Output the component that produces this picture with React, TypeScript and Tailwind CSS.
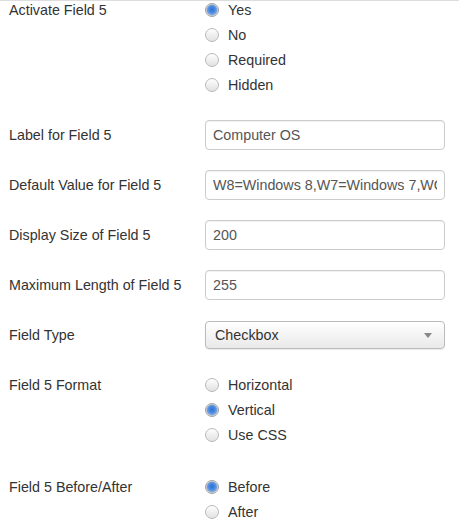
import { useId } from "react";

function Radio({ checked }: { checked?: boolean }) {
  const id = useId();
  return (
    <svg width="14" height="14" viewBox="0 0 14 14" className="shrink-0">
      <defs>
        <linearGradient id={id + "u"} x1="0" y1="0" x2="0" y2="1">
          <stop offset="0" stopColor="#ffffff" />
          <stop offset="1" stopColor="#e0e0e0" />
        </linearGradient>
        <radialGradient id={id + "c"} cx="0.5" cy="0.45" r="0.6">
          <stop offset="0" stopColor="#2f6fd3" />
          <stop offset="0.55" stopColor="#4a8be3" />
          <stop offset="1" stopColor="#9cc4f3" />
        </radialGradient>
      </defs>
      {checked ? (
        <>
          <circle cx="7" cy="7" r="6.5" fill="#dcdcdc" stroke="#a3a3a3" />
          <circle cx="7" cy="7" r="5" fill={`url(#${id}c)`} stroke="#5a86c4" strokeWidth="0.6" />
        </>
      ) : (
        <circle cx="7" cy="7" r="6.5" fill={`url(#${id}u)`} stroke="#b9b9b9" />
      )}
    </svg>
  );
}

function RadioGroup({ options, value }: { options: string[]; value: string }) {
  return (
    <div className="flex flex-col gap-[5px]">
      {options.map((o) => (
        <label key={o} className="flex items-center h-5 gap-[9px]">
          <Radio checked={o === value} />
          <span>{o}</span>
        </label>
      ))}
    </div>
  );
}

function TextInput({ value }: { value: string }) {
  return (
    <input
      readOnly
      value={value}
      className="w-[240px] h-[30px] border border-[#cccccc] rounded-[4px] bg-white px-[7px] text-[#555555] outline-none shadow-[inset_0_1px_1px_rgba(0,0,0,0.06)]"
    />
  );
}

export default function App() {
  return (
    <div
      className="w-[459px] min-h-[529px] bg-white border-t border-[#dddddd] pl-[9px] text-[14.3px] leading-5 text-[#333333]"
      style={{ fontFamily: '"Liberation Sans", Arial, sans-serif' }}
    >
      <div className="flex -mt-px mb-[25px]">
        <div className="w-[196px]">Activate Field 5</div>
        <RadioGroup options={["Yes", "No", "Required", "Hidden"]} value="Yes" />
      </div>

      <div className="flex items-center mb-5">
        <div className="w-[196px]">Label for Field 5</div>
        <TextInput value="Computer OS" />
      </div>

      <div className="flex items-center mb-5">
        <div className="w-[196px]">Default Value for Field 5</div>
        <TextInput value="W8=Windows 8,W7=Windows 7,WOSX=Mac OSX" />
      </div>

      <div className="flex items-center mb-5">
        <div className="w-[196px]">Display Size of Field 5</div>
        <TextInput value="200" />
      </div>

      <div className="flex items-center mb-5">
        <div className="w-[196px]">Maximum Length of Field 5</div>
        <TextInput value="255" />
      </div>

      <div className="flex items-center h-[30px] mb-[25px]">
        <div className="w-[196px]">Field Type</div>
        <div className="w-[240px] h-[28px] border border-[#bbbbbb] rounded-[4px] bg-linear-to-b from-white to-[#e9e9e9] pl-[9px] pr-[12px] flex items-center justify-between shadow-[0_1px_1px_rgba(0,0,0,0.08)]">
          <span>Checkbox</span>
          <svg width="8" height="5" viewBox="0 0 8 5">
            <polygon points="0,0 8,0 4,5" fill="#888888" />
          </svg>
        </div>
      </div>

      <div className="flex mb-8">
        <div className="w-[196px]">Field 5 Format</div>
        <RadioGroup options={["Horizontal", "Vertical", "Use CSS"]} value="Vertical" />
      </div>

      <div className="flex">
        <div className="w-[196px]">Field 5 Before/After</div>
        <RadioGroup options={["Before", "After"]} value="Before" />
      </div>
    </div>
  );
}
